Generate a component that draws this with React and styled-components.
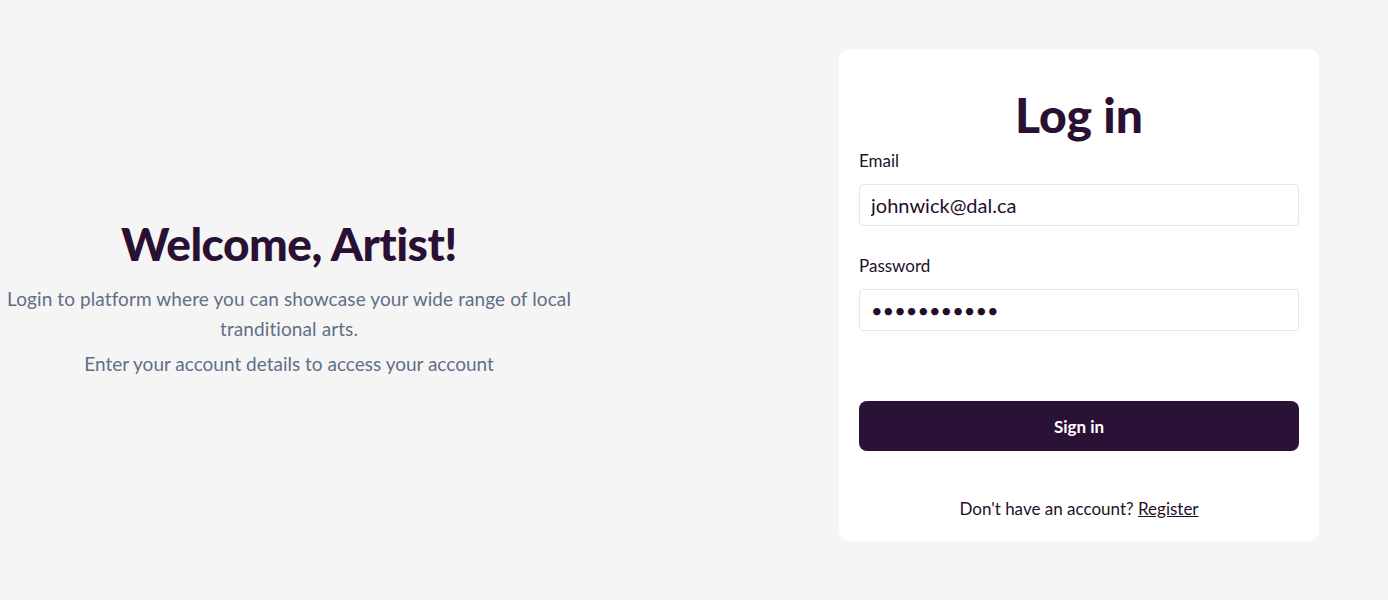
import React from 'react'
import styled, { createGlobalStyle } from 'styled-components';

const GlobalStyle = createGlobalStyle`
body{
    margin:0;
    background:#f5f5f5;
    font-family:Lato, "Open Sans", sans-serif;
}
`;

export default function App() {
    return (
        <>
            <GlobalStyle />
            <Page>
                <Intro>
                    <Welcome>Welcome, Artist!</Welcome>
                    <Lead>Login to platform where you can showcase your wide range of local tranditional arts.</Lead>
                    <Hint>Enter your account details to access your account</Hint>
                </Intro>
                <Card>
                    <Title>Log in</Title>
                    <Field>
                        <Label>Email</Label>
                        <Input type="email" defaultValue="johnwick@dal.ca" />
                    </Field>
                    <Field>
                        <Label>Password</Label>
                        <Input type="password" defaultValue="johnwick123" />
                    </Field>
                    <SignIn>Sign in</SignIn>
                    <Footer>
                        Don't have an account? <a href="#">Register</a>
                    </Footer>
                </Card>
            </Page>
        </>
    );
}

const Page = styled.div`
min-height:600px;
display:flex;
align-items:center;
`;

const Intro = styled.div`
width:578px;
display:flex;
flex-direction:column;
align-items:center;
text-align:center;
padding-bottom:10px;
`;

const Welcome = styled.h1`
margin:5px 0 13px;
font-size:46px;
font-weight:900;
color:#2a1133;
letter-spacing:-0.5px;
`;

const Lead = styled.p`
margin:0;
max-width:578px;
font-size:19px;
line-height:30px;
letter-spacing:0.1px;
color:#5f6f86;
`;

const Hint = styled.p`
margin:5px 0 0;
font-size:19px;
line-height:30px;
color:#5f6f86;
`;

const Card = styled.div`
margin-left:261px;
margin-bottom:10px;
width:480px;
box-sizing:border-box;
padding:37px 20px 22px;
background:#fff;
border-radius:10px;
display:flex;
flex-direction:column;
`;

const Title = styled.h2`
margin:0 0 7px;
text-align:center;
font-size:48px;
font-weight:900;
color:#2a1133;
`;

const Field = styled.div`
display:flex;
flex-direction:column;
margin-bottom:29px;
&:last-of-type{
    margin-bottom:22px;
}
`;

const Label = styled.label`
font-size:17px;
color:#1f0f2a;
margin-bottom:13px;
`;

const Input = styled.input`
height:42px;
box-sizing:border-box;
border:1px solid #e2e8f0;
border-radius:4px;
padding:0 11px;
font-family:Lato, sans-serif;
font-size:20px;
color:#1f0f2a;
outline:none;
`;

const SignIn = styled.button`
margin-top:48px;
height:50px;
border:none;
border-radius:8px;
background:#2a1236;
color:#fff;
font-family:Lato, sans-serif;
font-size:17px;
font-weight:700;
cursor:pointer;
`;

const Footer = styled.p`
margin:47px 0 0;
text-align:center;
font-size:17px;
color:#1f0f2a;
a{
    color:#1f0f2a;
}
`;
